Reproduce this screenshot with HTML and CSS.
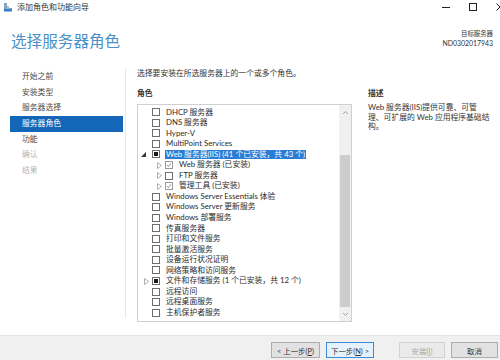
FILE: index.html
```html
<!DOCTYPE html>
<html lang="zh-CN">
<head>
<meta charset="utf-8">
<title>添加角色和功能向导</title>
<link rel="stylesheet" href="styles.css">
</head>
<body>
<div class="window">
  <div class="titlebar">
    <svg class="app-icon" width="10" height="10" viewBox="0 0 10 10">
      <rect x="1" y="1" width="3" height="7" fill="#8aa4bd"/>
      <rect x="4" y="4" width="2" height="4" fill="#aebfd0"/>
      <rect x="1" y="7" width="8" height="2.5" fill="#2f7dc4"/>
      <rect x="6" y="6" width="3" height="1.5" fill="#6aa0d0"/>
    </svg>
    <span class="title">添加角色和功能向导</span>
    <div class="controls">
      <svg class="ctl" width="10" height="10" viewBox="0 0 10 10"><line x1="1" y1="5.5" x2="9" y2="5.5" stroke="#222" stroke-width="1"/></svg>
      <svg class="ctl" width="10" height="10" viewBox="0 0 10 10"><rect x="1.5" y="1.5" width="7" height="7" fill="none" stroke="#222" stroke-width="1"/></svg>
      <svg class="ctl close" width="10" height="10" viewBox="0 0 10 10"><path d="M1.5 1.5 L8.5 8.5 M8.5 1.5 L1.5 8.5" stroke="#222" stroke-width="1"/></svg>
    </div>
  </div>

  <div class="header">
    <h1 class="heading">选择服务器角色</h1>
    <div class="target">
      <div class="target-label">目标服务器</div>
      <div class="target-name">ND0302017943</div>
    </div>
  </div>

  <div class="main">
    <nav class="steps">
      <div class="step">开始之前</div>
      <div class="step">安装类型</div>
      <div class="step">服务器选择</div>
      <div class="step active">服务器角色</div>
      <div class="step">功能</div>
      <div class="step disabled">确认</div>
      <div class="step disabled">结果</div>
    </nav>

    <section class="content">
      <p class="intro">选择要安装在所选服务器上的一个或多个角色。</p>
      <div class="columns">
        <div class="roles">
          <h2 class="label">角色</h2>
          <div class="listbox">
            <ul class="tree">
              <li class="row"><span class="exp"></span><span class="cb"></span><span class="txt">DHCP 服务器</span></li>
              <li class="row"><span class="exp"></span><span class="cb"></span><span class="txt">DNS 服务器</span></li>
              <li class="row"><span class="exp"></span><span class="cb"></span><span class="txt">Hyper-V</span></li>
              <li class="row"><span class="exp"></span><span class="cb"></span><span class="txt">MultiPoint Services</span></li>
              <li class="row"><span class="exp"><svg width="5" height="5" viewBox="0 0 5 5" class="open"><polygon points="5,0 5,5 0,5" fill="#333"/></svg></span><span class="cb partial"><i></i></span><span class="txt selected">Web 服务器(IIS) (41 个已安装，共 43 个)</span></li>
              <li class="row child"><span class="exp"><svg width="5" height="7" viewBox="0 0 5 7"><polygon points="0.5,0.5 4.5,3.5 0.5,6.5" fill="none" stroke="#a6a6a6" stroke-width="0.9"/></svg></span><span class="cb checked"><svg width="8" height="8" viewBox="0 0 8 8"><polyline points="1.5,4.2 3.2,6 6.6,1.8" fill="none" stroke="#777" stroke-width="1.1"/></svg></span><span class="txt">Web 服务器 (已安装)</span></li>
              <li class="row child"><span class="exp"><svg width="5" height="7" viewBox="0 0 5 7"><polygon points="0.5,0.5 4.5,3.5 0.5,6.5" fill="none" stroke="#a6a6a6" stroke-width="0.9"/></svg></span><span class="cb"></span><span class="txt">FTP 服务器</span></li>
              <li class="row child"><span class="exp"><svg width="5" height="7" viewBox="0 0 5 7"><polygon points="0.5,0.5 4.5,3.5 0.5,6.5" fill="none" stroke="#a6a6a6" stroke-width="0.9"/></svg></span><span class="cb checked"><svg width="8" height="8" viewBox="0 0 8 8"><polyline points="1.5,4.2 3.2,6 6.6,1.8" fill="none" stroke="#777" stroke-width="1.1"/></svg></span><span class="txt">管理工具 (已安装)</span></li>
              <li class="row"><span class="exp"></span><span class="cb"></span><span class="txt">Windows Server Essentials 体验</span></li>
              <li class="row"><span class="exp"></span><span class="cb"></span><span class="txt">Windows Server 更新服务</span></li>
              <li class="row"><span class="exp"></span><span class="cb"></span><span class="txt">Windows 部署服务</span></li>
              <li class="row"><span class="exp"></span><span class="cb"></span><span class="txt">传真服务器</span></li>
              <li class="row"><span class="exp"></span><span class="cb"></span><span class="txt">打印和文件服务</span></li>
              <li class="row"><span class="exp"></span><span class="cb"></span><span class="txt">批量激活服务</span></li>
              <li class="row"><span class="exp"></span><span class="cb"></span><span class="txt">设备运行状况证明</span></li>
              <li class="row"><span class="exp"></span><span class="cb"></span><span class="txt">网络策略和访问服务</span></li>
              <li class="row"><span class="exp"><svg width="5" height="7" viewBox="0 0 5 7"><polygon points="0.5,0.5 4.5,3.5 0.5,6.5" fill="none" stroke="#a6a6a6" stroke-width="0.9"/></svg></span><span class="cb partial"><i></i></span><span class="txt">文件和存储服务 (1 个已安装，共 12 个)</span></li>
              <li class="row"><span class="exp"></span><span class="cb"></span><span class="txt">远程访问</span></li>
              <li class="row"><span class="exp"></span><span class="cb"></span><span class="txt">远程桌面服务</span></li>
              <li class="row"><span class="exp"></span><span class="cb"></span><span class="txt">主机保护者服务</span></li>
            </ul>
            <div class="scrollbar">
              <div class="sb-arrow"><svg width="7" height="5" viewBox="0 0 7 5"><polyline points="1,4 3.5,1.5 6,4" fill="none" stroke="#a0a0a0" stroke-width="1"/></svg></div>
              <div class="sb-gap"></div>
              <div class="sb-thumb"></div>
              <div class="sb-rest"></div>
              <div class="sb-arrow"><svg width="7" height="5" viewBox="0 0 7 5"><polyline points="1,1 3.5,3.5 6,1" fill="none" stroke="#a0a0a0" stroke-width="1"/></svg></div>
            </div>
          </div>
        </div>
        <div class="desc">
          <h2 class="label">描述</h2>
          <p class="desc-text">Web 服务器(IIS)提供可靠、可管<br>理、可扩展的 Web 应用程序基础结<br>构。</p>
        </div>
      </div>
    </section>
  </div>

  <div class="footer">
    <button class="btn">&lt; 上一步(<u>P</u>)</button>
    <button class="btn primary">下一步(<u>N</u>) &gt;</button>
    <button class="btn disabled">安装(<u>I</u>)</button>
    <button class="btn">取消</button>
  </div>
</div>
</body>
</html>
```

FILE: styles.css
```css
* { box-sizing: border-box; }
html, body { margin: 0; padding: 0; }
body {
  width: 500px;
  height: 360px;
  overflow: hidden;
  background: #ffffff;
  font-family: Lato, "Noto Sans CJK SC", sans-serif;
  font-size: 7.8px;
  color: #2b2b2b;
}
.window {
  width: 500px;
  height: 360px;
  display: flex;
  flex-direction: column;
  background: #fff;
}

/* title bar */
.titlebar {
  height: 14px;
  display: flex;
  align-items: center;
  padding-left: 3px;
}
.app-icon { flex: none; }
.title {
  margin-left: 4px;
  font-size: 8px;
  color: #333;
  line-height: 14px;
}
.controls {
  margin-left: auto;
  display: flex;
  align-items: center;
  gap: 17px;
  margin-right: -5px;
}
.ctl { display: block; }

/* header */
.header {
  height: 51px;
  display: flex;
  justify-content: space-between;
  align-items: flex-start;
}
.heading {
  margin: 18px 0 0 11px;
  font-size: 15.6px;
  font-weight: normal;
  line-height: 18px;
  color: #4a8fc8;
}
.target {
  margin: 16px 7px 0 0;
  text-align: right;
  font-size: 6.4px;
  line-height: 8.5px;
  color: #333;
}
.target-name { font-size: 6.9px; }

/* main */
.main {
  flex: 1;
  display: flex;
  min-height: 0;
}
.steps {
  width: 126px;
  flex: none;
  margin: 3px 0 17px 0;
  padding-top: 1px;
  border-right: 1px solid #e6e6e6;
}
.step {
  height: 15.7px;
  line-height: 15.7px;
  margin: 0 2px 0 10px;
  padding-left: 12px;
  color: #4a4a4a;
}
.step.active {
  background: #1466b8;
  color: #fff;
}
.step.disabled { color: #b4b4b4; }

.content {
  flex: 1;
  padding: 2px 0 0 11px;
  display: flex;
  flex-direction: column;
}
.intro {
  margin: 0;
  line-height: 12px;
  color: #333;
}
.columns {
  display: flex;
  gap: 16px;
  margin-top: 8px;
}
.label {
  margin: 0;
  font-size: 7.8px;
  font-weight: bold;
  line-height: 12px;
  color: #333;
}
.roles { width: 215px; flex: none; }
.listbox {
  margin-top: 5px;
  height: 218px;
  border: 1px solid #d0d0d0;
  display: flex;
}
.tree {
  flex: 1;
  list-style: none;
  margin: 0;
  padding: 2px 0 0 0;
}
.row {
  height: 10.55px;
  display: flex;
  align-items: center;
  padding-left: 2px;
  white-space: nowrap;
}
.row.child { padding-left: 15px; }
.exp {
  width: 12px;
  flex: none;
  display: flex;
  align-items: center;
  justify-content: center;
}
.exp .open { margin-left: -6px; margin-top: 1px; }
.cb {
  width: 8px;
  height: 8px;
  flex: none;
  border: 1px solid #6e6e6e;
  background: #fff;
  display: flex;
  align-items: center;
  justify-content: center;
}
.cb.checked { border-color: #9a9a9a; }
.cb.checked svg { display: block; }
.cb.partial i {
  width: 4px;
  height: 4px;
  background: #1a1a1a;
  display: block;
}
.txt {
  margin-left: 5px;
  padding: 0 1px;
  line-height: 9.5px;
  color: #2b2b2b;
}
.txt.selected {
  background: #2b7cd3;
  color: #fff;
}

.scrollbar {
  width: 12px;
  flex: none;
  background: #f0f0f0;
  display: flex;
  flex-direction: column;
}
.sb-arrow {
  height: 14px;
  display: flex;
  align-items: center;
  justify-content: center;
}
.sb-gap { height: 36px; }
.sb-thumb {
  height: 152px;
  margin: 0 1px;
  background: #cdcdcd;
}
.sb-rest { flex: 1; }

.desc { width: 130px; flex: none; }
.desc-text {
  margin: 4px 0 0 0;
  line-height: 9.5px;
  color: #333;
  white-space: nowrap;
}

/* footer */
.footer {
  height: 25px;
  flex: none;
  background: #f0f0f0;
  border-top: 1px solid #e2e2e2;
  display: flex;
  align-items: flex-start;
  justify-content: flex-end;
  padding: 6px 2px 0 0;
}
.btn {
  height: 16px;
  padding: 0;
  font-family: inherit;
  font-size: 7.4px;
  color: #333;
  background: #e1e1e1;
  border: 1px solid #adadad;
  width: 47px;
  margin-left: 6px;
}
.btn:nth-child(1) { width: 49px; }
.btn.primary {
  width: 48px;
  background: #e5f1fb;
  border-color: #3c8ad6;
}
.btn.disabled {
  width: 46px;
  margin-left: 25px;
  color: #a8a8a8;
  background: #eaeaea;
  border-color: #d2d2d2;
}
.btn u { text-decoration: underline; }
```
